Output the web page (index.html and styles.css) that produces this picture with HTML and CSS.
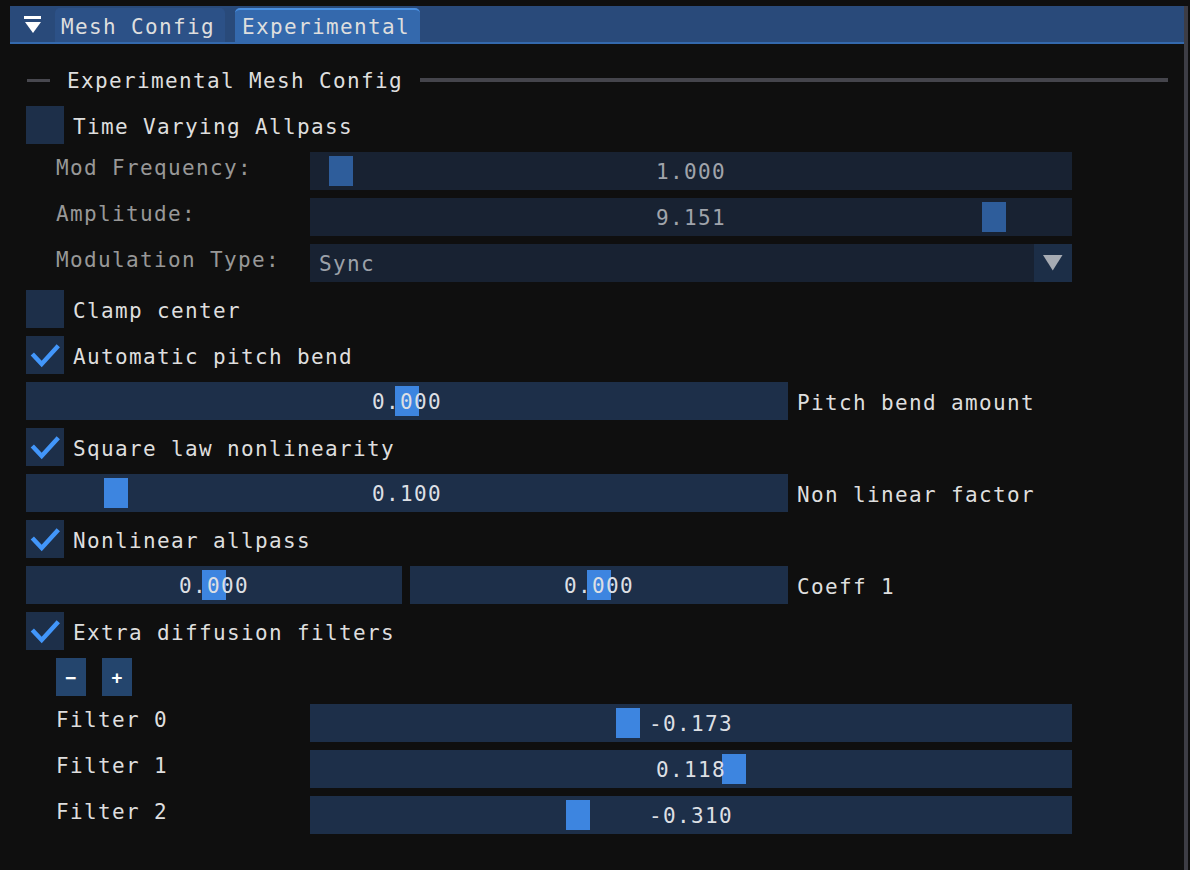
FILE: index.html
```html
<!DOCTYPE html>
<html>
<head>
<meta charset="utf-8">
<link rel="stylesheet" href="styles.css">
</head>
<body>
<div class="window">
  <div class="tabbar">
    <span class="menu-btn"><svg width="18" height="18" viewBox="0 0 18 18"><rect x="0" y="0" width="17" height="3" fill="#ffffff"/><polygon points="1,6 17,6 9,17" fill="#ffffff"/></svg></span>
    <div class="tab">Mesh Config</div>
    <div class="tab active">Experimental</div>
  </div>
  <div class="content">
    <div class="row sep"><span class="sep-dash"></span><span class="sep-text">Experimental Mesh Config</span><span class="sep-line"></span></div>

    <div class="row"><span class="checkbox"></span><span class="cb-label">Time Varying Allpass</span></div>
    <div class="row indent disabled"><span class="label">Mod Frequency:</span><div class="frame wide"><span class="grab" style="left:19px"></span><span class="value">1.000</span></div></div>
    <div class="row indent disabled"><span class="label">Amplitude:</span><div class="frame wide"><span class="grab" style="left:672px"></span><span class="value">9.151</span></div></div>
    <div class="row indent disabled"><span class="label">Modulation Type:</span><div class="frame wide combo"><span class="combo-text">Sync</span><span class="combo-btn"><svg width="20" height="16" viewBox="0 0 20 16"><polygon points="0,0 19.5,0 9.75,15.5" fill="#a6abb3"/></svg></span></div></div>

    <div class="row"><span class="checkbox"></span><span class="cb-label">Clamp center</span></div>

    <div class="row"><span class="checkbox"><svg class="check" width="38" height="38" viewBox="0 0 38 38"><polyline points="6.3,18 15.7,28 32.3,9.7" fill="none" stroke="#4296fa" stroke-width="4.5"/></svg></span><span class="cb-label">Automatic pitch bend</span></div>
    <div class="row"><div class="frame wide"><span class="grab" style="left:369px"></span><span class="value">0.000</span></div><span class="side-label">Pitch bend amount</span></div>

    <div class="row"><span class="checkbox"><svg class="check" width="38" height="38" viewBox="0 0 38 38"><polyline points="6.3,18 15.7,28 32.3,9.7" fill="none" stroke="#4296fa" stroke-width="4.5"/></svg></span><span class="cb-label">Square law nonlinearity</span></div>
    <div class="row"><div class="frame wide"><span class="grab" style="left:78px"></span><span class="value">0.100</span></div><span class="side-label">Non linear factor</span></div>

    <div class="row"><span class="checkbox"><svg class="check" width="38" height="38" viewBox="0 0 38 38"><polyline points="6.3,18 15.7,28 32.3,9.7" fill="none" stroke="#4296fa" stroke-width="4.5"/></svg></span><span class="cb-label">Nonlinear allpass</span></div>
    <div class="row pair"><div class="frame half-a"><span class="grab" style="left:176px"></span><span class="value">0.000</span></div><div class="frame half-b"><span class="grab" style="left:177px"></span><span class="value">0.000</span></div><span class="side-label">Coeff 1</span></div>

    <div class="row"><span class="checkbox"><svg class="check" width="38" height="38" viewBox="0 0 38 38"><polyline points="6.3,18 15.7,28 32.3,9.7" fill="none" stroke="#4296fa" stroke-width="4.5"/></svg></span><span class="cb-label">Extra diffusion filters</span></div>
    <div class="row indent buttons"><span class="btn">−</span><span class="btn">+</span></div>
    <div class="row indent"><span class="label">Filter 0</span><div class="frame wide"><span class="grab" style="left:306px"></span><span class="value">-0.173</span></div></div>
    <div class="row indent"><span class="label">Filter 1</span><div class="frame wide"><span class="grab" style="left:412px"></span><span class="value">0.118</span></div></div>
    <div class="row indent"><span class="label">Filter 2</span><div class="frame wide"><span class="grab" style="left:256px"></span><span class="value">-0.310</span></div></div>
  </div>
</div>
</body>
</html>
```

FILE: styles.css
```css
html, body {
  margin: 0;
  padding: 0;
  background: #0f0f0f;
}

body {
  font-family: "DejaVu Sans Mono", "Liberation Mono", monospace;
  font-size: 21px;
  letter-spacing: 1.36px;
  color: #dedede;
}

.window {
  box-sizing: border-box;
  margin: 6px 0 0 10px;
  width: 1178px;
  min-height: 864px;
  border-right: 4px solid #3d3d45;
}

/* tab bar */
.tabbar {
  display: flex;
  align-items: flex-end;
  height: 36px;
  padding-left: 14px;
  background: #294a7a;
  border-bottom: 2px solid #3469ad;
}

.menu-btn {
  align-self: flex-start;
  margin-top: 10px;
  width: 18px;
  height: 18px;
  display: block;
}

.menu-btn svg {
  display: block;
}

.tab {
  box-sizing: border-box;
  height: 34px;
  padding: 4px 10px 0 6px;
  line-height: 30px;
  background: #2c5187;
  border-radius: 5px 5px 0 0;
  margin-left: 13px;
  white-space: nowrap;
}

.tab.active {
  margin-left: 10px;
  padding: 3px 10px 0 7px;
  line-height: 29px;
  background: #3469ad;
  border-top: 2px solid #4a90e2;
}

/* content */
.content {
  display: flex;
  flex-direction: column;
  gap: 8px;
  padding: 16px 16px 0 16px;
}

.row {
  display: flex;
  align-items: center;
  height: 38px;
  white-space: nowrap;
}

.row.indent {
  padding-left: 30px;
}

/* separator text */
.sep-dash {
  display: block;
  width: 23px;
  height: 3px;
  margin-left: 1px;
  margin-top: 2px;
  background: #48484f;
}

.sep-text {
  margin: 0 17px 0 17px;
  padding-top: 4px;
  line-height: 34px;
}

.sep-line {
  display: block;
  flex: 1;
  height: 4px;
  margin-top: 2px;
  background: #45454c;
}

/* checkbox */
.checkbox {
  display: block;
  flex: none;
  width: 38px;
  height: 38px;
  background: #1d2f49;
}

.check {
  display: block;
}

.cb-label {
  margin-left: 9px;
  padding-top: 5px;
  line-height: 33px;
}

/* labels */
.label {
  align-self: flex-start;
  width: 254px;
  flex: none;
  padding-top: 2px;
  line-height: 28px;
}

.side-label {
  margin-left: 9px;
  padding-top: 5px;
  line-height: 33px;
}

/* slider frames */
.frame {
  position: relative;
  height: 38px;
  flex: none;
  background: #1d2f49;
  display: flex;
  align-items: center;
  justify-content: center;
}

.frame.wide {
  width: 762px;
}

.frame.half-a {
  width: 376px;
}

.frame.half-b {
  width: 378px;
  margin-left: 8px;
}

.grab {
  position: absolute;
  top: 4px;
  width: 24px;
  height: 30px;
  background: #3d85e0;
}

.value {
  position: relative;
  padding-top: 3px;
  line-height: 35px;
  color: #dcdfe4;
}

/* disabled state */
.disabled .label {
  color: #989898;
}

.disabled .frame {
  background: #182232;
}

.disabled .grab {
  background: #2e5d9b;
}

.disabled .value {
  color: #a0a4ab;
}

/* combo */
.frame.combo {
  justify-content: space-between;
}

.combo-text {
  padding-left: 9px;
  padding-top: 3px;
  line-height: 35px;
  color: #9ca1a9;
}

.combo-btn {
  display: flex;
  align-items: center;
  justify-content: center;
  width: 38px;
  height: 38px;
  background: #1c2e47;
}

.combo-btn svg {
  display: block;
}

/* small buttons */
.buttons {
  gap: 16px;
}

.btn {
  display: flex;
  align-items: center;
  justify-content: center;
  width: 30px;
  height: 38px;
  background: #24456d;
  color: #ffffff;
  font-size: 18px;
  font-weight: bold;
  letter-spacing: 0;
}
```
